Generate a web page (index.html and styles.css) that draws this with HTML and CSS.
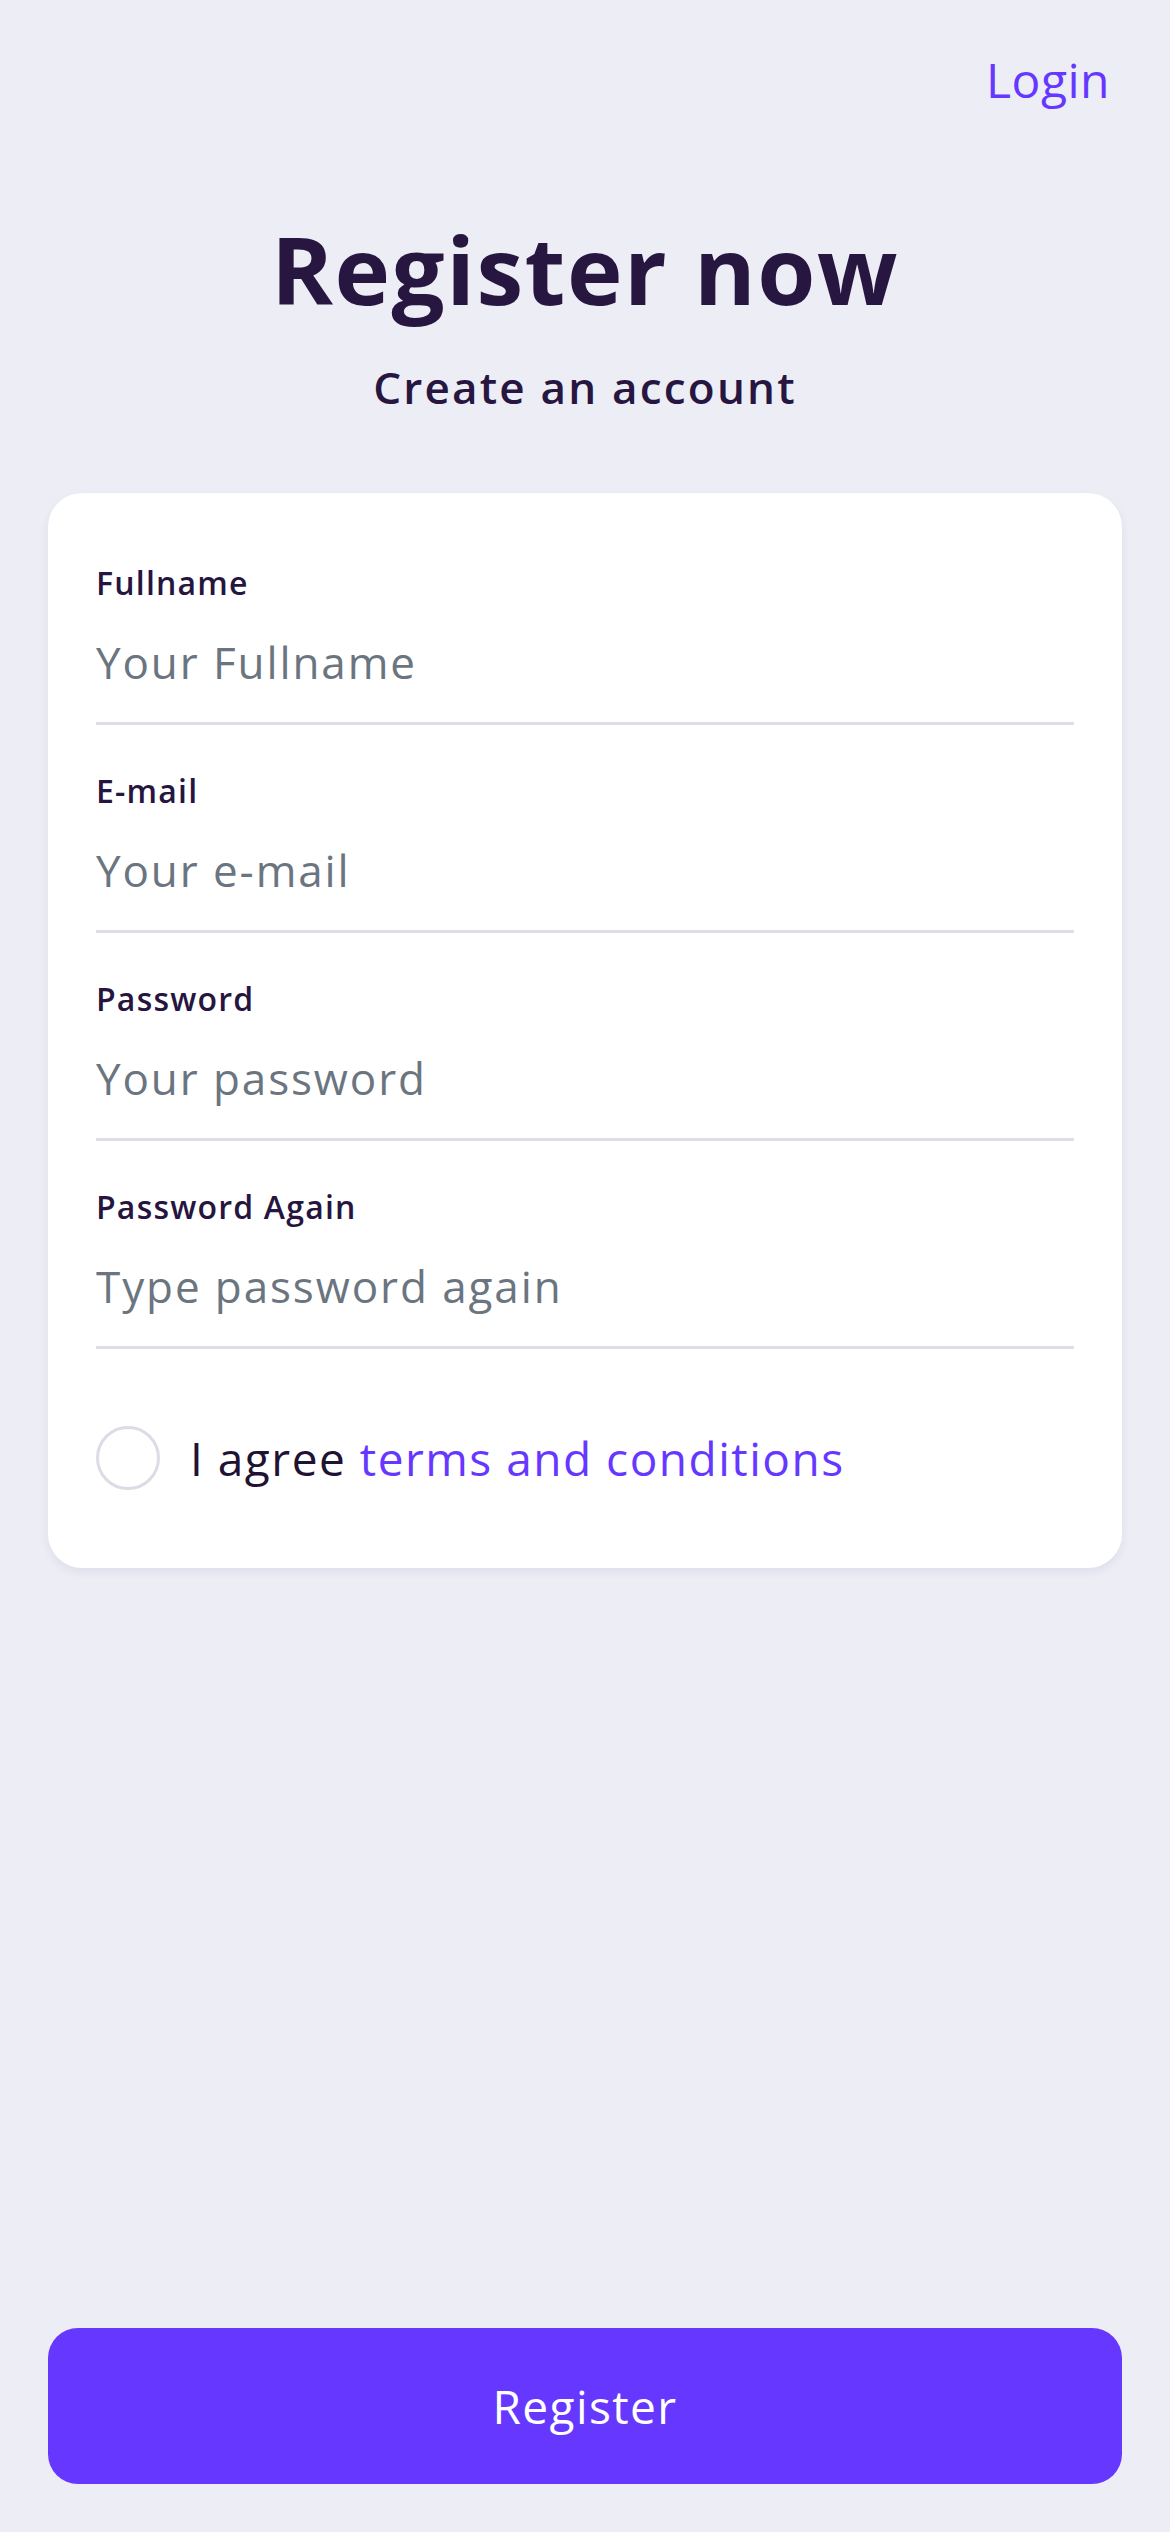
FILE: index.html
```html
<!DOCTYPE html>
<html lang="en">
<head>
<meta charset="utf-8">
<title>Register now</title>
<link rel="stylesheet" href="styles.css">
</head>
<body>
<div class="screen">
  <header class="topbar">
    <a class="login-link" href="#">Login</a>
  </header>
  <h1 class="title">Register now</h1>
  <p class="subtitle">Create an account</p>

  <form class="card">
    <div class="field">
      <label class="field-label">Fullname</label>
      <div class="field-input">Your Fullname</div>
    </div>
    <div class="field">
      <label class="field-label">E-mail</label>
      <div class="field-input">Your e-mail</div>
    </div>
    <div class="field">
      <label class="field-label">Password</label>
      <div class="field-input">Your password</div>
    </div>
    <div class="field">
      <label class="field-label">Password Again</label>
      <div class="field-input">Type password again</div>
    </div>
    <div class="agree-row">
      <span class="radio"></span>
      <span class="agree-text">I agree <a class="terms" href="#">terms and conditions</a></span>
    </div>
  </form>

  <button class="register-btn" type="button">Register</button>
</div>
</body>
</html>
```

FILE: styles.css
```css
html, body {
  margin: 0;
  padding: 0;
}

body {
  background: #ededf6;
  font-family: "Open Sans", "Noto Sans", sans-serif;
  color: #26163f;
}

.screen {
  min-height: 2532px;
  display: flex;
  flex-direction: column;
  box-sizing: border-box;
  padding: 0 48px 48px;
}

.topbar {
  display: flex;
  justify-content: flex-end;
  padding-top: 48px;
  padding-right: 12px;
}

.login-link {
  font-size: 48px;
  line-height: 64px;
  color: #6638ff;
  text-decoration: none;
  font-weight: 400;
  letter-spacing: 0.5px;
}

.title {
  margin: 101px 0 0;
  text-align: center;
  font-size: 94px;
  line-height: 112px;
  font-weight: 700;
  letter-spacing: 1.5px;
  color: #271640;
}

.subtitle {
  margin: 32px 0 0;
  text-align: center;
  font-size: 44px;
  line-height: 60px;
  font-weight: 600;
  letter-spacing: 2.2px;
  color: #271640;
}

.card {
  margin: 76px 0 0;
  background: #ffffff;
  border-radius: 34px;
  padding: 24px 48px 78px;
  box-shadow: 0 4px 10px rgba(40, 30, 90, 0.07);
}

.field {
  padding: 46px 0 30px;
  border-bottom: 3px solid #dedde9;
}

.field-label {
  display: block;
  font-size: 32px;
  line-height: 40px;
  font-weight: 600;
  letter-spacing: 1.2px;
  color: #26163f;
}

.field-input {
  margin-top: 29px;
  font-size: 44px;
  line-height: 60px;
  letter-spacing: 1.9px;
  color: #6b7580;
}

.agree-row {
  margin-top: 77px;
  display: flex;
  align-items: center;
  gap: 30px;
}

.radio {
  width: 64px;
  height: 64px;
  box-sizing: border-box;
  border-radius: 50%;
  border: 3px solid #dcdbe7;
  background: #fff;
  flex: none;
}

.agree-text {
  font-size: 46px;
  line-height: 64px;
  letter-spacing: 1.5px;
  color: #1f1233;
}

.terms {
  color: #6638ff;
  text-decoration: none;
}

.register-btn {
  margin-top: auto;
  height: 156px;
  border: none;
  border-radius: 30px;
  background: #6638ff;
  color: #ffffff;
  font-family: "Open Sans", "Noto Sans", sans-serif;
  font-size: 46px;
  font-weight: 500;
  letter-spacing: 1.4px;
}
```
